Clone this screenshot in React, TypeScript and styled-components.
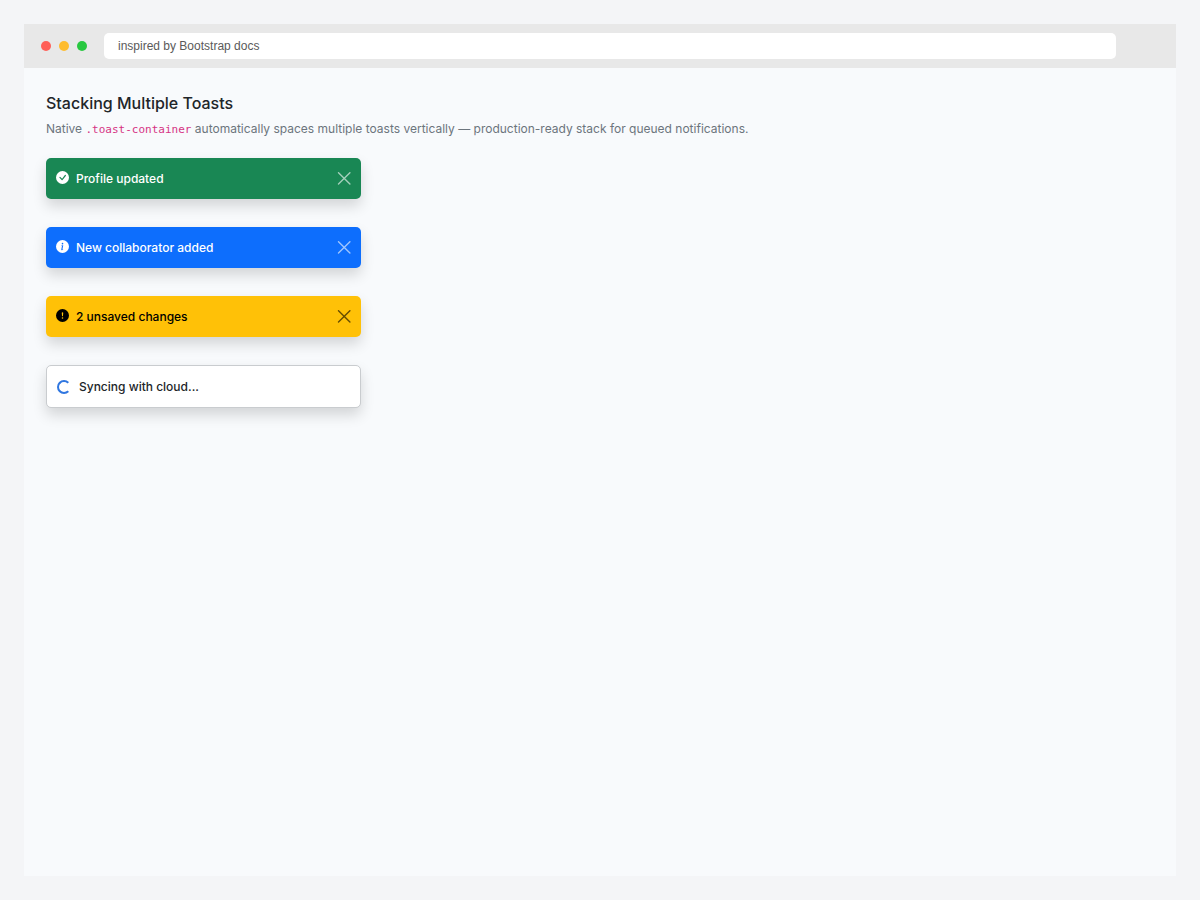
import { FC, useState } from "react";
import {
    BsCheckCircleFill,
    BsExclamationCircleFill,
    BsInfoCircleFill,
} from "react-icons/bs";
import type { IconType } from "react-icons";
import styled, { createGlobalStyle } from "styled-components";

const GlobalStyle = createGlobalStyle`
    * {
        box-sizing: border-box;
    }

    body {
        margin: 0;
        background-color: #f4f5f7;
        color: #212529;
        font-family: Inter, "Liberation Sans", sans-serif;
        font-size: 12px;
        line-height: 21px;
    }
`;

const Page = styled.div`
    display: flex;
    min-height: 100vh;
    padding: 24px;
`;

const BrowserWindow = styled.div`
    display: flex;
    flex: 1;
    flex-direction: column;
    min-width: 0;
    background-color: #f8fafc;
`;

const TitleBar = styled.header`
    display: flex;
    align-items: center;
    gap: 17px;
    padding: 9px 60px 9px 17px;
    background-color: #e8e8e8;
`;

const WindowDots = styled.div`
    display: flex;
    gap: 8px;
`;

const WindowDot = styled.span<{ $color: string }>`
    width: 10px;
    height: 10px;
    border-radius: 50%;
    background-color: ${(props) => props.$color};
`;

const AddressInput = styled.input`
    flex: 1;
    min-width: 0;
    height: 26px;
    padding: 0 14px;
    border: 0;
    border-radius: 5px;
    background-color: white;
    color: #5a5a5a;
    font-family: "Liberation Sans", Arial, sans-serif;
    font-size: 12px;
`;

const Content = styled.main`
    padding: 24px 22px;
`;

const Title = styled.h1`
    margin: 0 0 4px;
    font-size: 16px;
    font-weight: 500;
    line-height: 22px;
`;

const Description = styled.p`
    margin: 0 0 19px;
    color: #6c757d;
`;

const Code = styled.code`
    color: #d63384;
    font-family: "DejaVu Sans Mono", monospace;
    font-size: 11px;
    line-height: 1;
`;

const ToastContainer = styled.div`
    display: flex;
    flex-direction: column;
    gap: 28px;
    width: 315px;
    max-width: 100%;
`;

interface ToastBoxProps {
    $background: string;
    $color: string;
    $bordered?: boolean;
}

const ToastBox = styled.div<ToastBoxProps>`
    display: flex;
    align-items: center;
    gap: 7px;
    padding: 10px;
    border: ${(props) => (props.$bordered ? "1px solid #c9cccf" : "0")};
    border-radius: 5px;
    background-color: ${(props) => props.$background};
    background-clip: padding-box;
    box-shadow: 0 7px 14px rgba(0, 0, 0, 0.15);
    color: ${(props) => props.$color};
    font-weight: 500;

    > svg {
        flex: none;
        margin-bottom: 2px;
    }
`;

const ToastText = styled.span`
    flex: 1;
`;

const CloseButton = styled.button<{ $light: boolean }>`
    display: flex;
    padding: 0;
    border: 0;
    background: none;
    color: ${(props) => (props.$light ? "white" : "black")};
    cursor: pointer;
    opacity: 0.6;

    &:hover {
        opacity: 0.8;
    }
`;

const Spinner = styled.span`
    width: 14px;
    height: 14px;
    margin-right: 1px;
    border: 2px solid #2f76e0;
    border-right-color: transparent;
    border-radius: 50%;
`;

interface Toast {
    text: string;
    Icon: IconType;
    background: string;
    light: boolean;
}

const TOASTS: Toast[] = [
    {
        text: "Profile updated",
        Icon: BsCheckCircleFill,
        background: "#198754",
        light: true,
    },
    {
        text: "New collaborator added",
        Icon: BsInfoCircleFill,
        background: "#0d6efd",
        light: true,
    },
    {
        text: "2 unsaved changes",
        Icon: BsExclamationCircleFill,
        background: "#ffc107",
        light: false,
    },
];

const CloseIcon: FC = () => (
    <svg width="14" height="14" viewBox="0 0 14 14" aria-hidden="true">
        <path
            d="M1.5.7l11.4 11.4M12.9.7L1.5 12.1"
            fill="none"
            stroke="currentColor"
            strokeWidth="1.4"
            strokeLinecap="round"
        />
    </svg>
);

const App: FC = () => {
    const [toasts, setToasts] = useState(TOASTS);

    const closeToast = (text: string) => {
        setToasts((prev) => prev.filter((toast) => toast.text !== text));
    };

    return (
        <Page>
            <GlobalStyle />
            <BrowserWindow>
                <TitleBar>
                    <WindowDots>
                        <WindowDot $color="#ff5f57" />
                        <WindowDot $color="#febc2e" />
                        <WindowDot $color="#28c840" />
                    </WindowDots>
                    <AddressInput
                        type="text"
                        aria-label="Address"
                        defaultValue="inspired by Bootstrap docs"
                    />
                </TitleBar>
                <Content>
                    <Title>Stacking Multiple Toasts</Title>
                    <Description>
                        Native <Code>.toast-container</Code> automatically
                        spaces multiple toasts vertically — production-ready
                        stack for queued notifications.
                    </Description>
                    <ToastContainer>
                        {toasts.map(({ text, Icon, background, light }) => (
                            <ToastBox
                                key={text}
                                role="alert"
                                $background={background}
                                $color={light ? "white" : "black"}
                            >
                                <Icon size={13} />
                                <ToastText>{text}</ToastText>
                                <CloseButton
                                    type="button"
                                    aria-label="Close"
                                    $light={light}
                                    onClick={() => closeToast(text)}
                                >
                                    <CloseIcon />
                                </CloseButton>
                            </ToastBox>
                        ))}
                        <ToastBox
                            role="status"
                            $background="white"
                            $color="#212529"
                            $bordered
                        >
                            <Spinner />
                            <ToastText>Syncing with cloud...</ToastText>
                        </ToastBox>
                    </ToastContainer>
                </Content>
            </BrowserWindow>
        </Page>
    );
};

export default App;
